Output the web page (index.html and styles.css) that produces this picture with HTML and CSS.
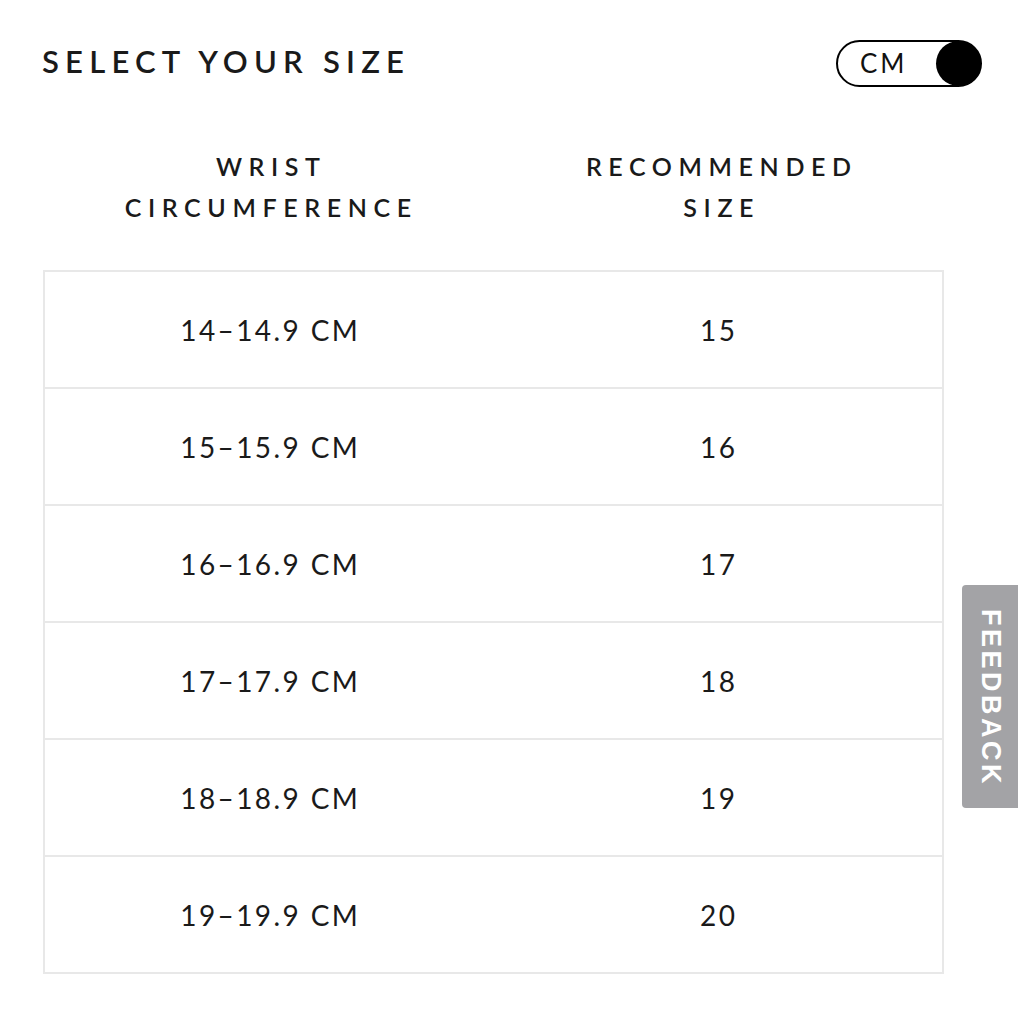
FILE: index.html
```html
<!DOCTYPE html>
<html>
<head>
<meta charset="utf-8">
<link rel="stylesheet" href="styles.css">
</head>
<body>
<div class="page">
  <div class="top">
    <h1 class="title">SELECT YOUR SIZE</h1>
    <div class="toggle"><span class="toggle-label">CM</span><span class="knob"></span></div>
  </div>
  <div class="head">
    <div class="head-cell">WRIST<br>CIRCUMFERENCE</div>
    <div class="head-cell">RECOMMENDED<br>SIZE</div>
  </div>
  <div class="table">
    <div class="row"><div class="cell">14–14.9 CM</div><div class="cell">15</div></div>
    <div class="row"><div class="cell">15–15.9 CM</div><div class="cell">16</div></div>
    <div class="row"><div class="cell">16–16.9 CM</div><div class="cell">17</div></div>
    <div class="row"><div class="cell">17–17.9 CM</div><div class="cell">18</div></div>
    <div class="row"><div class="cell">18–18.9 CM</div><div class="cell">19</div></div>
    <div class="row"><div class="cell">19–19.9 CM</div><div class="cell">20</div></div>
  </div>
</div>
<div class="feedback"><span class="feedback-text">FEEDBACK</span></div>
</body>
</html>
```
FILE: styles.css
```css
html, body {
  margin: 0;
  padding: 0;
  background: #ffffff;
}
body {
  font-family: "Lato", "DejaVu Sans", sans-serif;
  color: #1a1a1a;
  width: 1024px;
  height: 1024px;
  overflow: hidden;
  position: relative;
}
.page {
  padding: 38px 0 0 43px;
  width: 939px;
}
.top {
  display: flex;
  justify-content: space-between;
  align-items: center;
  height: 50px;
}
.title {
  margin: 0 0 0 -1px;
  font-size: 31px;
  font-weight: 600;
  letter-spacing: 6.2px;
  line-height: 46px;
  position: relative;
  top: -2px;
}
.toggle {
  box-sizing: border-box;
  width: 146px;
  height: 47px;
  border: 2px solid #000;
  border-radius: 24px;
  display: flex;
  align-items: center;
  justify-content: space-between;
  padding: 0 0 0 22px;
}
.toggle-label {
  font-size: 26px;
  letter-spacing: 3px;
  font-weight: 400;
  color: #111;
}
.knob {
  width: 45px;
  height: 45px;
  border-radius: 50%;
  background: #000;
  margin-right: -1px;
}
.head {
  display: grid;
  grid-template-columns: 1fr 1fr;
  width: 901px;
  margin-top: 58px;
}
.head-cell {
  text-align: center;
  font-size: 25px;
  font-weight: 600;
  letter-spacing: 6.6px;
  line-height: 41px;
  padding-left: 6px;
}
.table {
  margin-top: 42px;
  width: 901px;
  box-sizing: border-box;
  border: 2px solid #e8e8e8;
}
.row {
  display: grid;
  grid-template-columns: 1fr 1fr;
  height: 115px;
  align-items: center;
}
.row + .row {
  border-top: 2px solid #e8e8e8;
}
.cell {
  text-align: center;
  font-size: 28px;
  letter-spacing: 2.4px;
  font-weight: 400;
  padding-left: 2px;
}
.feedback {
  position: absolute;
  left: 962px;
  top: 585px;
  width: 56px;
  height: 223px;
  background: #a3a3a6;
  border-radius: 4px 0 0 4px;
  display: flex;
  align-items: center;
  justify-content: center;
}
.feedback-text {
  writing-mode: vertical-rl;
  color: #ffffff;
  font-family: "Liberation Sans", Arial, sans-serif;
  font-weight: 700;
  font-size: 27px;
  letter-spacing: 3.5px;
  margin-top: 4px;
}
```
